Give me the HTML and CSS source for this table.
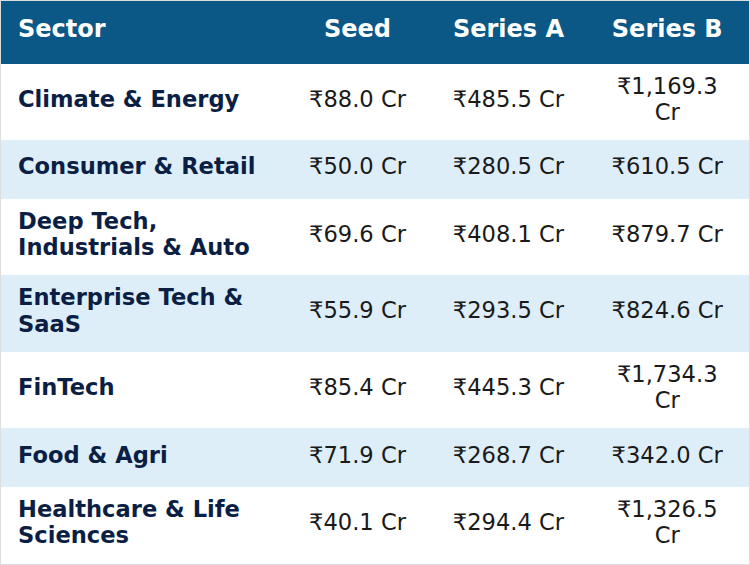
FILE: index.html
```html
<!DOCTYPE html>
<html lang="en">
<head>
<meta charset="utf-8">
<title>Funding by Sector</title>
<link rel="stylesheet" href="styles.css">
</head>
<body>
<table class="funding">
  <colgroup>
    <col class="c-sector">
    <col class="c-seed">
    <col class="c-a">
    <col class="c-b">
  </colgroup>
  <thead>
    <tr>
      <th class="sector">Sector</th>
      <th>Seed</th>
      <th>Series A</th>
      <th>Series B</th>
    </tr>
  </thead>
  <tbody>
    <tr><td class="sector">Climate &amp; Energy</td><td>₹88.0 Cr</td><td>₹485.5 Cr</td><td>₹1,169.3 Cr</td></tr>
    <tr class="alt"><td class="sector">Consumer &amp; Retail</td><td>₹50.0 Cr</td><td>₹280.5 Cr</td><td>₹610.5 Cr</td></tr>
    <tr><td class="sector">Deep Tech, Industrials &amp; Auto</td><td>₹69.6 Cr</td><td>₹408.1 Cr</td><td>₹879.7 Cr</td></tr>
    <tr class="alt"><td class="sector">Enterprise Tech &amp; SaaS</td><td>₹55.9 Cr</td><td>₹293.5 Cr</td><td>₹824.6 Cr</td></tr>
    <tr><td class="sector">FinTech</td><td>₹85.4 Cr</td><td>₹445.3 Cr</td><td>₹1,734.3 Cr</td></tr>
    <tr class="alt"><td class="sector">Food &amp; Agri</td><td>₹71.9 Cr</td><td>₹268.7 Cr</td><td>₹342.0 Cr</td></tr>
    <tr><td class="sector">Healthcare &amp; Life Sciences</td><td>₹40.1 Cr</td><td>₹294.4 Cr</td><td>₹1,326.5 Cr</td></tr>
  </tbody>
</table>
</body>
</html>
```

FILE: styles.css
```css
html, body {
  margin: 0;
  padding: 0;
  background: #ffffff;
}

.funding {
  width: 749px;
  border-collapse: collapse;
  table-layout: fixed;
  border: 1px solid #dddddd;
  font-family: "DejaVu Sans", Verdana, sans-serif;
}

.c-sector { width: 283px; }
.c-seed { width: 148px; }
.c-a { width: 154px; }
.c-b { width: 164px; }

.funding th,
.funding td {
  padding: 9px 17px 15px;
  text-align: center;
  vertical-align: middle;
  line-height: 26.2px;
}

.funding thead tr {
  height: 63px;
  background: #0b5786;
}

.funding th {
  color: #ffffff;
  font-size: 24px;
  font-weight: bold;
  line-height: 28px;
}

.funding tbody tr {
  height: 59px;
  background: #ffffff;
}

.funding tbody tr.alt {
  background: #ddeef9;
}

.funding td {
  font-size: 22.6px;
  color: #1a1a1a;
}

.funding .sector {
  text-align: left;
}

.funding td.sector {
  font-weight: bold;
  color: #0b1e44;
}
```
